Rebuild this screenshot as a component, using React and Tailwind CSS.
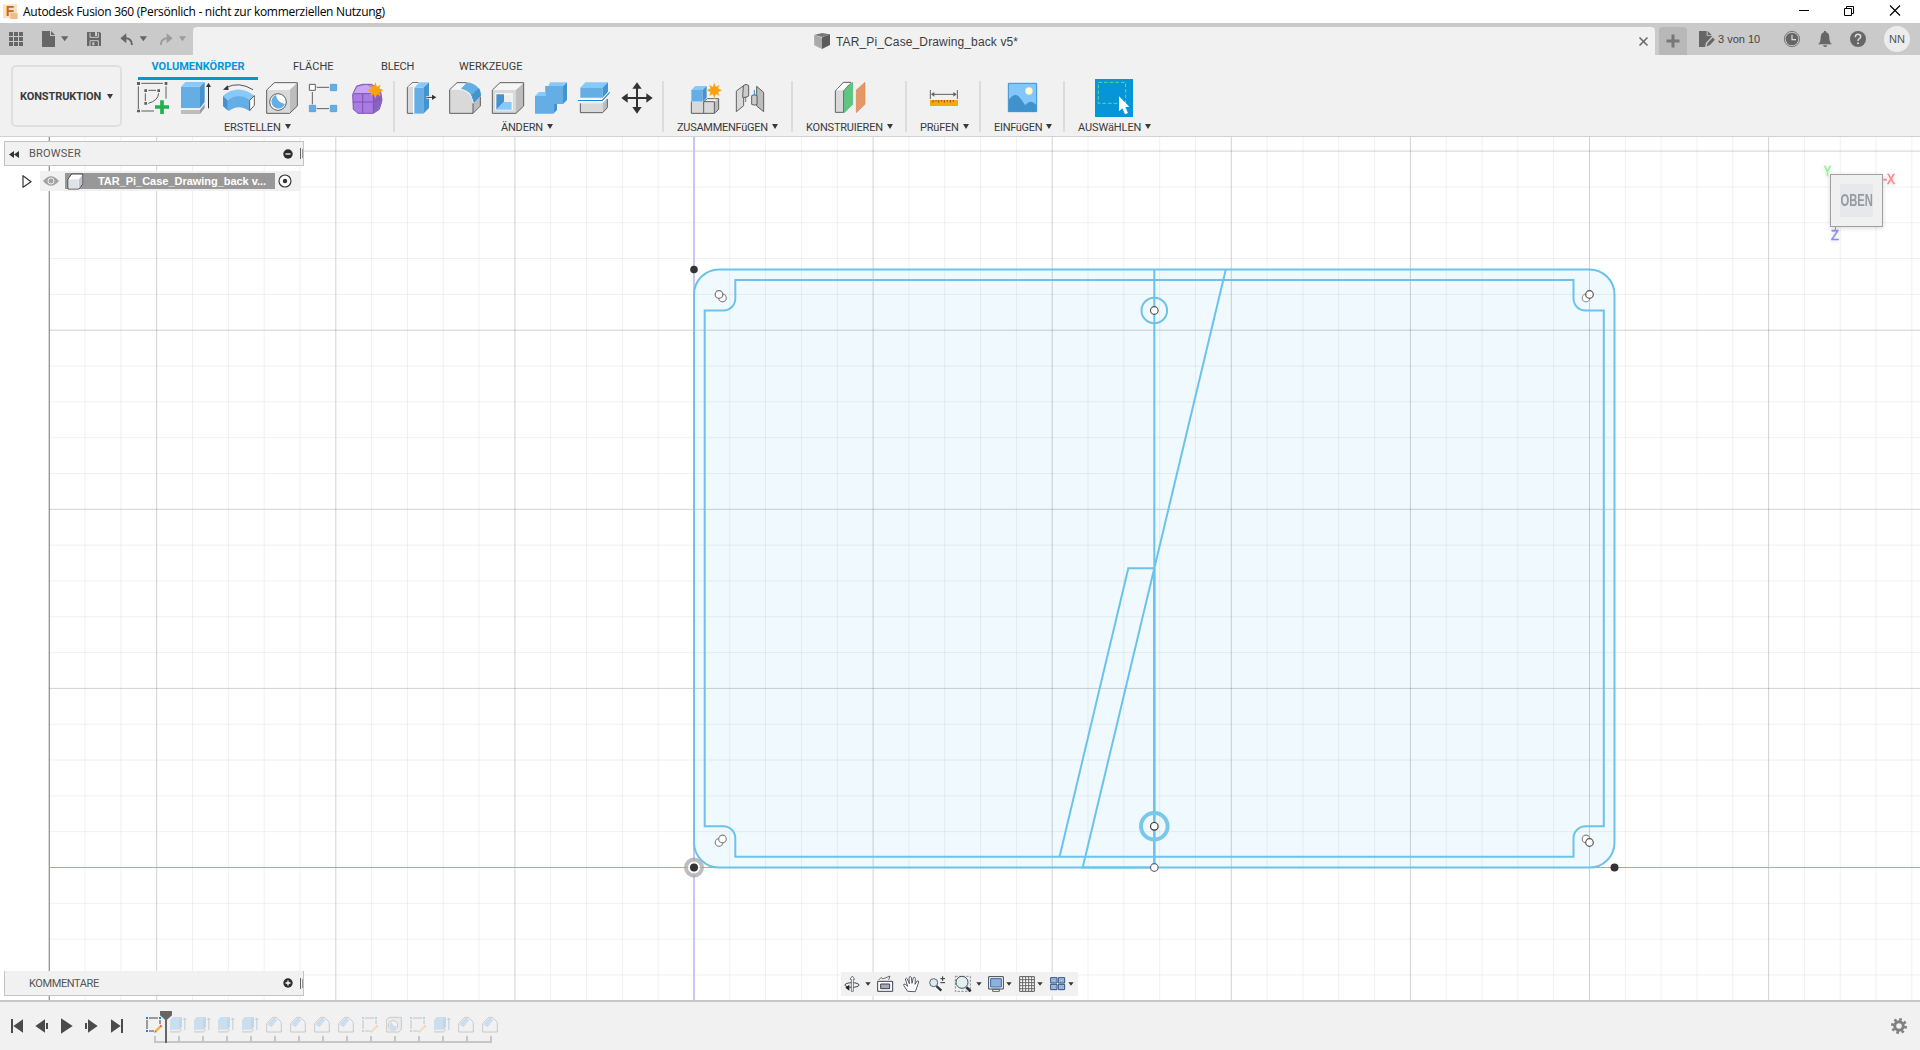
import React from "react";

const BLUE = "#65aee5";
const BLUE_TOP = "#86c9fb";
const BLUE_SIDE = "#4593cc";
const GRAY = "#d9d9d9";
const GRAY_TOP = "#f6f6f6";
const GRAY_SIDE = "#bdbdbd";
const INK = "#5f5f5f";

function Pic({ v, className, children }) {
  return (
    <svg viewBox={v} className={"shrink-0 " + className} fill="none">
      {children}
    </svg>
  );
}

const STAR = "1126,247 1131,260 1142,254 1138,265 1150,271 1138,277 1142,289 1131,283 1126,296 1121,283 1110,289 1114,277 1102,271 1114,265 1110,254 1121,260";

function Tri({ className = "" }) {
  return <span className={"border-x-[3.5px] border-t-[5px] border-x-transparent border-t-[#3a3a3a] " + className} />;
}

function CreateIcons() {
  const c = "h-[35px] w-[43px]";
  return (
    <>
      <Pic v="408 240 129 105" className={c}>
        <path d="M424 250H489M415 259V327M424 333H462M498 259V296" stroke={INK} strokeWidth="3" />
        <path d="M411 246h9v9h-9zM494 246h8v9h-8zM411 329h9v8h-9zM433 268h8v8h-8zM472 268h8v8h-8zM433 306h8v8h-8z" fill={INK} />
        <path d="M445 271H468M436 280V303M445 310Q474 302 476 280" stroke={INK} strokeWidth="3" />
        <path d="M486 301V342M465 321H507" stroke="#22b04d" strokeWidth="11" />
      </Pic>
      <Pic v="537 240 129 105" className={c}>
        <path d="M543 330H600V342H543z" fill="#bdbdbd" />
        <path d="M600 330L614 312V324L600 342z" fill="#9a9a9a" />
        <path d="M543 260H600V324H543z" fill={BLUE} />
        <path d="M543 260L556 246H614L600 260z" fill={BLUE_TOP} />
        <path d="M600 260L614 246V306L600 324z" fill={BLUE_SIDE} />
        <path d="M625.500 258V325" stroke="#333" strokeWidth="3" />
        <path d="M625.500 248L633 261H618z" fill="#333" />
      </Pic>
      <Pic v="666 240 129 105" className={c}>
        <path d="M678 263Q716 243 759 269" stroke="#333" strokeWidth="2.500" />
        <path d="M669 269L683 256L686 270z" fill="#333" />
        <path d="M669 287Q714 250 763 287L749 301Q716 276 682 301z" fill={BLUE_TOP} />
        <path d="M669 288L682 301Q716 276 749 300V333Q716 310 686 333L669 318z" fill={BLUE} />
        <path d="M682 301V331L669 318V288z" fill={BLUE_SIDE} />
        <path d="M749 301L763 287V316L749 332z" fill="#fff" stroke={INK} strokeWidth="3" />
      </Pic>
      <Pic v="795 240 129 105" className={c}>
        <path d="M800 270L823 248H892L869 270z" fill={GRAY_TOP} />
        <path d="M869 270L892 248V318L869 340z" fill={GRAY_SIDE} />
        <path d="M800 270H869V340H800z" fill={GRAY} />
        <path d="M800 270L823 248H892V318L869 340H800z" stroke={INK} strokeWidth="3" />
        <circle cx="834" cy="306" r="25" fill="#fff" stroke={INK} strokeWidth="3" />
        <path d="M828 285Q830 307 855 312A21 21 0 1 1 828 285" fill={BLUE} />
      </Pic>
      <Pic v="924 240 129 105" className={c}>
        <path d="M950 262H987M937 276V313M950 326H987" stroke={INK} strokeWidth="3" />
        <path d="M928 253h18v18h-18z" fill="#fff" stroke={INK} strokeWidth="3" />
        <path d="M991 253h19v19h-19zM928 316h19v19h-19zM991 316h19v19h-19z" fill={BLUE} stroke={BLUE_SIDE} strokeWidth="2" />
      </Pic>
      <Pic v="1053 240 129 105" className={c}>
        <path d="M1058 283L1070 258L1088 253H1115L1142 275L1146 300L1138 328L1120 340H1074L1060 328z" fill="#a97be3" stroke="#7d54b4" strokeWidth="3" strokeLinejoin="round" />
        <path d="M1060 282L1072 260L1100 254L1122 268L1116 280z" fill="#c9a5f5" />
        <path d="M1122 282L1144 285V310L1132 332L1120 336z" fill="#8a60c0" />
        <path d="M1058 306H1120L1145 295M1088 282V340M1061 281H1118L1142 272M1120 282V338" stroke="#7d54b4" strokeWidth="3" />
        <polygon points={STAR} fill="#f9a20c" />
      </Pic>
    </>
  );
}

function ModifyIcons() {
  const c = "h-[35px] w-[43px]";
  return (
    <>
      <Pic v="15 90 129 105" className={c}>
        <path d="M22 112L37 98H58L42 112V190H22z" fill={GRAY} stroke={INK} strokeWidth="3" />
        <path d="M24 111L38 99H56L42 111z" fill={GRAY_TOP} />
        <path d="M39 112V191H70L87 173V96H57L40 112z" fill="#fff" />
        <path d="M43 113H70V191H43z" fill={BLUE} />
        <path d="M43 113L58 97H87L70 113z" fill={BLUE_TOP} />
        <path d="M70 113L87 97V174L70 191z" fill={BLUE_SIDE} />
        <path d="M79 142H98" stroke="#fff" strokeWidth="8" />
        <path d="M79 142H98" stroke="#333" strokeWidth="3" />
        <path d="M96 134L109 142L96 150z" fill="#333" />
      </Pic>
      <Pic v="144 90 129 105" className={c}>
        <path d="M149 119L171 98H198L184 119z" fill={GRAY_TOP} />
        <path d="M149 119H178Q214 124 219 160V190H149z" fill={GRAY} />
        <path d="M219 162L241 140V166L219 190z" fill={GRAY_SIDE} />
        <path d="M200 98H171L149 119V190H219L241 168V140M219 160V190" stroke={INK} strokeWidth="3" />
        <path d="M183 116L201 97Q240 102 243 137L222 158Q217 122 183 116z" fill={BLUE} />
        <path d="M222 158L243 137Q242 122 237 114L214 136z" fill={BLUE_SIDE} />
      </Pic>
      <Pic v="273 90 129 105" className={c}>
        <path d="M277 120L300 98H371L348 120z" fill={GRAY_TOP} />
        <path d="M348 120L371 98V168L348 190z" fill={GRAY_SIDE} />
        <path d="M277 120H348V190H277z" fill={GRAY} />
        <path d="M277 120L300 98H371V168L348 190H277z" stroke={INK} strokeWidth="3" />
        <path d="M286 130H338V181H286z" fill="#fff" />
        <path d="M289 133H312V156L289 179z" fill={BLUE_SIDE} />
        <path d="M312 133H335V156H312z" fill="#eee" />
        <path d="M289 179L312 156H335V179z" fill={BLUE_TOP} />
      </Pic>
      <Pic v="402 90 129 105" className={c}>
        <path d="M405 138L417 126H437L450 97H500L488 108H436V138z" fill={BLUE_TOP} />
        <path d="M405 138H436V108H489V162H460V191H405z" fill={BLUE} />
        <path d="M489 108L501 97V150L489 162zM460 162H471V180L460 191z" fill={BLUE_SIDE} />
      </Pic>
      <Pic v="531 90 129 105" className={c}>
        <path d="M541 113L556 97H624L608 113z" fill={BLUE_TOP} />
        <path d="M541 113H608V143H541z" fill={BLUE} />
        <path d="M608 113L624 97V128L608 143z" fill={BLUE_SIDE} />
        <path d="M541 160H608V188H541z" fill={GRAY} />
        <path d="M608 160L622 145V173L608 188z" fill={GRAY_SIDE} />
        <path d="M541 160V188H608L622 173V147" stroke={INK} strokeWidth="3" />
        <path d="M534 151.500H607L629 127" stroke="#fff" strokeWidth="9" />
        <path d="M534 151.500H607L629 127" stroke="#0f8fe0" strokeWidth="3.500" />
      </Pic>
      <Pic v="660 90 129 105" className={c}>
        <path d="M711 108V180M677 144H745" stroke="#333" strokeWidth="6" />
        <path d="M711 97L725 116H697zM711 191L725 171H697zM664 144L683 130V158zM758 144L739 130V158z" fill="#333" />
      </Pic>
    </>
  );
}

function JointIcons() {
  const c = "h-[35px] w-[43px]";
  return (
    <>
      <Pic v="861 90 129 105" className={c}>
        <path d="M874 120H908V155H874z" fill={BLUE} />
        <path d="M874 120L886 108H920L908 120z" fill={BLUE_TOP} />
        <path d="M908 120L920 108V143L908 155z" fill={BLUE_SIDE} />
        <path d="M874 155H911V190H874z" fill={GRAY} />
        <path d="M911 155H943V190H911z" fill={GRAY} />
        <path d="M911 155L922 146H956L943 155z" fill={GRAY_TOP} />
        <path d="M943 155L956 146V178L943 190z" fill={GRAY_SIDE} />
        <path d="M874 155V190H943L956 178V146H922L911 155V190M911 155H943V190" stroke={INK} strokeWidth="3" />
        <polygon transform="translate(-183 -150)" points={STAR} fill="#f9a20c" stroke="#f2f2f2" strokeWidth="1" />
      </Pic>
      <Pic v="990 90 129 105" className={c}>
        <path d="M1009 123L1031 107V167L1009 185z" fill={GRAY} stroke={INK} strokeWidth="3" />
        <path d="M1030 107Q1038 99 1046 107V138Q1038 145 1028 142z" fill="#ccc" stroke={INK} strokeWidth="3" />
        <path d="M1070 109L1091 127V185L1070 168z" fill={GRAY_SIDE} stroke={INK} strokeWidth="3" />
        <path d="M1055 137Q1063 131 1071 137V163Q1063 168 1055 163z" fill="#ccc" stroke={INK} strokeWidth="3" />
        <path d="M1037 139V156M1063 120V137" stroke="#1d93e4" strokeWidth="3" />
      </Pic>
    </>
  );
}

function RibbonGroup({ w, iconPad, labelPad, label, track = "tracking-[-0.2px]", children }) {
  return (
    <div className={"flex flex-col pt-[3px] " + w}>
      <div className={"flex h-[35px] " + iconPad}>{children}</div>
      <div className={"flex h-6 items-center gap-[4px] pt-[2px] " + labelPad}>
        <span className={"whitespace-nowrap " + track}>{label}</span>
        <Tri className="-mt-[3px]" />
      </div>
    </div>
  );
}

const Sep = () => <div className="mt-1 h-[51px] w-[2px] shrink-0 bg-[#dcdcdc]" />;

function TitleBar() {
  return (
    <div className="flex h-[23px] items-center bg-white">
      <Pic v="0 0 48 54" className="ml-[3px] h-[18px] w-[16px]">
        <rect x="0" y="4" width="42" height="42" fill="#fbe0c8" />
        <rect x="22" y="30" width="22" height="18" fill="#f6b98a" />
        <text x="8" y="40" fontSize="42" fontWeight="bold" fontFamily="Liberation Sans, sans-serif" fill="#c96a17">F</text>
      </Pic>
      <span className="ml-[4px] mt-px whitespace-nowrap font-['Open_Sans',sans-serif] text-[12px] tracking-[-0.28px] text-black">
        Autodesk Fusion 360 (Persönlich - nicht zur kommerziellen Nutzung)
      </span>
      <Pic v="0 0 105 20" className="ml-auto mr-[17px] h-5 w-[105px]">
        <path d="M1 8.500h10" stroke="#000" />
        <path d="M46.500 6.500h7v7h-7zM48.500 6V4.500h7v7H54" stroke="#000" />
        <path d="M92 3.500l10 10M102 3.500l-10 10" stroke="#000" strokeWidth="1.200" />
      </Pic>
    </div>
  );
}

function TabBar() {
  const c = "#666666";
  return (
    <div className="flex h-8 bg-[#cacaca]">
      <div className="flex w-[193px]">
        <Pic v="0 69 102 96" className="h-8 w-[34px]">
          <path d="M27 96h12v12H27zM42 96h12v12H42zM57 96h12v12H57zM27 111h12v12H27zM42 111h12v12H42zM57 111h12v12H57zM27 126h12v12H27zM42 126h12v12H42zM57 126h12v12H57z" fill={c} />
        </Pic>
        <Pic v="102 69 138 96" className="h-8 w-[46px]">
          <path d="M126 93H150V108H165V141H126zM153 93L165 105H153z" fill={c} />
          <path d="M183 109H205L194 124z" fill={c} />
        </Pic>
        <Pic v="240 69 90 96" className="h-8 w-[30px]">
          <path d="M261 96H299L303 100V138H261z" fill={c} />
          <path d="M270 98V112H295V98M270 138V122H295V138" stroke="#cacaca" strokeWidth="3" />
          <path d="M285 96h6v12h-6zM277 127h6v9h-6z" fill="#cacaca" />
        </Pic>
        <Pic v="330 69 129 96" className="h-8 w-[43px]">
          <path d="M361 115L379 100V130z" fill={c} />
          <path d="M374 115Q395 113 396 135" stroke={c} strokeWidth="6" />
          <path d="M419 109H441L430 124z" fill={c} />
        </Pic>
        <Pic v="459 69 120 96" className="h-8 w-[40px]">
          <path d="M518 115L500 100V130z" fill="#9b9b9b" />
          <path d="M505 115Q484 113 482 135" stroke="#9b9b9b" strokeWidth="6" />
          <path d="M537 109H558L547 124z" fill="#9b9b9b" />
        </Pic>
      </div>
      <div className="mt-1 flex h-7 w-[1462px] items-center rounded-t-[4px] bg-[#f1f1f1] text-[#3c3c3c]">
        <Pic v="102 39 48 48" className="ml-[621px] h-4 w-4">
          <path d="M102 45L126 39L150 43L126 51z" fill="#777" />
          <path d="M102 45L126 53V87L103 76z" fill="#a9a9a9" />
          <path d="M126 52L150 43V75L126 87z" fill="#5c5c5c" />
        </Pic>
        <span className="ml-[6px] mt-px whitespace-nowrap font-['Liberation_Sans',sans-serif] text-[12px] tracking-[0.13px]">TAR_Pi_Case_Drawing_back v5*</span>
        <Pic v="0 0 9 9" className="ml-auto mr-[7px] h-[9px] w-[9px]">
          <path d="M.5.5l8 8M8.500.5l-8 8" stroke="#666" strokeWidth="1.500" />
        </Pic>
      </div>
      <div className="ml-1 mt-1 flex h-7 w-7 items-center justify-center rounded-t-[4px] bg-[#b8b8b8]">
        <Pic v="0 0 14 14" className="h-[14px] w-[14px]">
          <path d="M7 .5v13M.5 7h13" stroke="#777" strokeWidth="3" />
        </Pic>
      </div>
      <Pic v="291 69 60 96" className="ml-[10px] h-8 w-[20px]">
        <path d="M297 93H320V107H335V110L318 128L315 141H297zM323 93L335 105H323z" fill={c} />
        <path d="M318 141L322 129L338 112L346 119L330 136z" fill={c} stroke="#cacaca" strokeWidth="2" />
      </Pic>
      <span className="ml-[1px] mt-[1px] w-[66px] whitespace-nowrap font-['Liberation_Sans',sans-serif] text-[11px] leading-[31px] text-[#444]">3 von 10</span>
      <Pic v="552 69 252 96" className="h-8 w-[84px]">
        <circle cx="576" cy="117" r="23" stroke={c} strokeWidth="2.500" />
        <circle cx="576" cy="117" r="19" fill={c} />
        <path d="M576 104V119H588" stroke="#ddd" strokeWidth="3.500" />
        <path d="M654 133Q662 128 662 112Q663 98 672 97V93H678V97Q688 98 688 112Q688 128 696 133zM669 136H682Q681 141 675.500 141Q670 141 669 136z" fill={c} />
        <circle cx="774" cy="117" r="24" fill={c} />
        <path d="M766 112Q766 103 774 103Q782 103 782 110Q782 114 778 116Q774 118 774 123" stroke="#ddd" strokeWidth="4.500" />
        <circle cx="774" cy="130" r="3" fill="#ddd" />
      </Pic>
      <div className="ml-[16px] mt-[3px] flex h-[26px] w-[26px] items-center justify-center rounded-full bg-[#ececec]">
        <span className="font-['Liberation_Sans',sans-serif] text-[11px] text-[#555]">NN</span>
      </div>
    </div>
  );
}

function Ribbon() {
  return (
    <div className="flex h-[82px] border-b border-[#d2d2d2] bg-[#f1f1f1] font-[Roboto,sans-serif] text-[11px] text-[#3a3a3a]">
      <div className="ml-[11px] mr-[14px] mt-[10px] flex h-[62px] w-[111px] shrink-0 items-center gap-[6px] rounded-[5px] border-2 border-[#dfdfdf] pl-[7px] pt-[2px]">
        <span className="font-bold tracking-[-0.1px]">KONSTRUKTION</span>
        <Tri className="-mt-px" />
      </div>
      <div className="flex flex-col">
        <div className="flex h-[22px] leading-[24px]">
          <div className="ml-[2px] flex w-[120px] shrink-0 flex-col items-center">
            <span className="h-[22px] font-bold text-[#0696d7]">VOLUMENKÖRPER</span>
            <div className="h-[3px] w-full shrink-0 bg-[#0696d7]" />
          </div>
          <span className="ml-[35px] w-[88px]">FLÄCHE</span>
          <span className="w-[78px] tracking-[-0.2px]">BLECH</span>
          <span>WERKZEUGE</span>
        </div>
        <div className="flex">
          <RibbonGroup w="w-[257px]" iconPad="" labelPad="pl-[88px]" label="ERSTELLEN"><CreateIcons /></RibbonGroup>
          <Sep />
          <RibbonGroup w="w-[267px]" iconPad="pl-[10px]" labelPad="pl-[106px]" label="ÄNDERN"><ModifyIcons /></RibbonGroup>
          <Sep />
          <RibbonGroup w="w-[127px]" iconPad="pl-[23px]" labelPad="pl-[13px]" label="ZUSAMMENFüGEN" track="tracking-[-0.28px]"><JointIcons /></RibbonGroup>
          <Sep />
          <RibbonGroup w="w-[112px]" iconPad="pl-[37px]" labelPad="pl-[13px]" label="KONSTRUIEREN">
            <Pic v="150 180 129 105" className="h-[35px] w-[43px]">
              <path d="M166 213L190 187H213L191 213V277H166z" fill={GRAY} stroke={INK} strokeWidth="3" />
              <path d="M169 211L191 189H211L190 211z" fill="#fff" />
              <path d="M193 210L218 187V253L193 278z" fill="#5bc77f" stroke="#3ea862" strokeWidth="1.500" />
              <path d="M229 210L255 187V253L229 278z" fill="#e59865" stroke="#c97a45" strokeWidth="1.500" />
            </Pic>
          </RibbonGroup>
          <Sep />
          <RibbonGroup w="w-[72px]" iconPad="pl-[20px]" labelPad="pl-[13px]" label="PRüFEN">
            <Pic v="441 180 105 105" className="h-[35px] w-[35px]">
              <path d="M451 210V237M532 210V237M456 223H528" stroke={INK} strokeWidth="3" />
              <path d="M453 223L463 216V230zM530 223L520 216V230z" fill={INK} />
              <path d="M450 240H534V258H450z" fill="#f9a70f" />
              <path d="M459 240V248M468 240V245M476 240V248M485 240V245M493 240V248M502 240V245M511 240V248M520 240V245" stroke="#7c5a1a" strokeWidth="3" />
            </Pic>
          </RibbonGroup>
          <Sep />
          <RibbonGroup w="w-[82px]" iconPad="pl-[24px]" labelPad="pl-[13px]" label="EINFüGEN" track="tracking-[-0.3px]">
            <Pic v="675 180 105 105" className="h-[35px] w-[35px]">
              <path d="M685 190H770V275H685z" fill="#82c7fb" stroke="#3f92cb" strokeWidth="3" />
              <circle cx="747" cy="213" r="11" fill="#ffffd8" stroke="#e0d890" />
              <path d="M686 240Q706 212 722 236L736 256Q750 236 769 254V275H686z" fill="#3f92cb" />
            </Pic>
          </RibbonGroup>
          <Sep />
          <RibbonGroup w="w-[110px]" iconPad="pl-[30px]" labelPad="pl-[13px]" label="AUSWäHLEN" track="tracking-[-0.1px]">
            <Pic v="945 177 114 114" className="-mt-px h-[38px] w-[38px]">
              <path d="M945 177H1059V291H945z" fill="#0696d7" />
              <path d="M955 187H1037V250H955z" stroke="#5fd98a" strokeWidth="3" strokeDasharray="11 6" />
              <path d="M1017 229V274L1027 265L1035 283L1044 279L1036 262L1048 260z" fill="#fff" />
            </Pic>
          </RibbonGroup>
        </div>
      </div>
    </div>
  );
}

const X0 = 694;
const Y0 = 867.5;
const STEP = 35.82;

function Point({ x, y, r = 3.8, c = "#555", fill = "#fff" }) {
  return <circle cx={x} cy={y} r={r} fill={fill} stroke={c} strokeWidth="1.200" />;
}

function Sketch() {
  const xs = [];
  for (let i = -18; i <= 34; i++) xs.push(i);
  const ys = [];
  for (let j = -3; j <= 20; j++) ys.push(j);
  const line = "#6cc3ea";
  return (
    <svg viewBox="0 137 1920 863" className="absolute inset-0 h-[863px] w-[1920px]" fill="none">
      <path
        d="M694 294.500A25 25 0 0 1 719 269.500H1589.500A25 25 0 0 1 1614.500 294.500V842.500A25 25 0 0 1 1589.500 867.500H719A25 25 0 0 1 694 842.500z"
        fill="#f0f9fe"
      />
      {xs.map((i) => (
        <path key={i} d={`M${X0 + i * STEP} 137V1000`} stroke="#000" strokeOpacity={i === -18 ? 0.55 : i % 5 === 0 ? 0.18 : 0.06} />
      ))}
      {ys.map((j) => (
        <path key={j} d={`M49 ${Y0 - j * STEP}H1920`} stroke="#000" strokeOpacity={j % 5 === 0 ? 0.18 : 0.06} />
      ))}
      <path d="M49 867.500H1920" stroke="#fff" />
      <path d="M49 867.500H1920" stroke="#f58a8a" />
      <path d="M694 137V1000" stroke="#c6c6fa" strokeWidth="2" />
      <circle cx="694" cy="867.500" r="8" stroke="#999" strokeOpacity=".65" strokeWidth="4" fill="#fff" fillOpacity=".7" />
      <g stroke={line} strokeWidth="2">
        <path d="M694 294.500A25 25 0 0 1 719 269.500H1589.500A25 25 0 0 1 1614.500 294.500V842.500A25 25 0 0 1 1589.500 867.500H719A25 25 0 0 1 694 842.500z" />
        <path d="M735.300 280H1573.500V298.500A12 12 0 0 0 1585.500 310.500H1603.800V826.300H1585.500A12 12 0 0 0 1573.500 838.300V856.800H735.300V838.300A12 12 0 0 0 723.300 826.300H704.700V310.500H723.300A12 12 0 0 0 735.300 298.500z" />
        <path d="M1154.300 269.500V867.500M1225.800 269.500L1154.300 568.300L1082.700 867.500H1154.300M1154.300 568.300H1128.300L1059.500 857" />
        <circle cx="1154.300" cy="310.500" r="12.800" />
        <path d="M1154.300 568V867.500" strokeWidth="2.300" />
        <circle cx="1154.300" cy="826.300" r="13.300" strokeWidth="4" stroke="#79c8ec" />
      </g>
      <Point x={1154.300} y={310.500} />
      <Point x={1154.300} y={826.300} c="#333" />
      <Point x={1154.300} y={867.500} c="#666" />
      <Point x={722.500} y={298} c="#888" />
      <Point x={719} y={294.500} c="#777" />
      <Point x={1586} y={298} c="#999" />
      <Point x={1589.500} y={294.500} />
      <Point x={719} y={842.500} c="#888" />
      <Point x={722.500} y={839} c="#888" />
      <Point x={1586} y={839} c="#888" />
      <Point x={1589.500} y={842.500} />
      <circle cx="694" cy="269.500" r="3.800" fill="#333" />
      <circle cx="694" cy="867.500" r="4" fill="#333" />
      <circle cx="1614.500" cy="867.500" r="4" fill="#333" />
    </svg>
  );
}

function ViewCube() {
  return (
    <svg viewBox="1815 155 90 95" className="absolute left-[1815px] top-[18px] h-[95px] w-[90px] drop-shadow-sm" fill="none" fontFamily="Liberation Sans, sans-serif">
      <text x="1824" y="176" fontSize="14" textLength="7" lengthAdjust="spacingAndGlyphs" fill="#90f590" stroke="#90f590" strokeWidth=".7">Y</text>
      <text x="1883" y="184" fontSize="14" textLength="12" lengthAdjust="spacingAndGlyphs" fill="#fb8484" stroke="#fb8484" strokeWidth=".5">-X</text>
      <text x="1831" y="240" fontSize="14" textLength="8" lengthAdjust="spacingAndGlyphs" fill="#8a8afa" stroke="#8a8afa" strokeWidth=".5">Z</text>
      <path d="M1835.500 226V231" stroke="#8a8afa" />
      <rect x="1830.500" y="174.500" width="52" height="52" fill="#f0f0f0" stroke="#a0a0a0" />
      <rect x="1840" y="184" width="33" height="33" fill="#e6e8eb" />
      <text x="1840.500" y="206" fontSize="16" fontWeight="bold" textLength="32.500" lengthAdjust="spacingAndGlyphs" fill="#979ba1">OBEN</text>
    </svg>
  );
}

function Handle() {
  return (
    <div className="ml-[7px] flex gap-px">
      <span className="h-[11px] w-px bg-[#666]" />
      <span className="h-[9px] w-px self-center bg-[#999]" />
    </div>
  );
}

function Panel({ title, plus }) {
  return (
    <div className={"flex h-[25px] w-[300px] items-center border border-[#c4c4c4] bg-[#f1f1f1] font-[Roboto,sans-serif] text-[11px] text-[#555] " + (plus ? "border-t-0" : "")}>
      <div className="w-[24px] pl-[4px]">
        {!plus && (
          <Pic v="0 0 10 7" className="mt-px h-[7px] w-[10px]">
            <path d="M5 0v7L0 3.500zM10 0v7L5 3.500z" fill="#333" />
          </Pic>
        )}
      </div>
      <span className={plus ? "mt-[2px] tracking-[-0.4px]" : "mt-px tracking-[0.2px]"}>{title}</span>
      <Pic v="0 0 10 10" className="ml-auto h-[10px] w-[10px]">
        <circle cx="5" cy="5" r="4.700" fill="#2d2d2d" />
        <path d={plus ? "M2.500 5h5M5 2.500v5" : "M2.500 5h5"} stroke="#fff" strokeWidth="1.300" />
      </Pic>
      <Handle />
    </div>
  );
}

function BrowserRow() {
  return (
    <div className="flex h-5 w-[279px] items-center">
      <Pic v="0 0 30 39" className="mr-[8px] h-[13px] w-[10px]">
        <path d="M3 2V37L27 20z" fill="#fff" stroke="#333" strokeWidth="3.500" strokeLinejoin="round" />
      </Pic>
      <div className="flex h-5 flex-1 items-center bg-[#f1f1f1]">
        <Pic v="0 0 48 30" className="ml-[3px] h-[10px] w-[16px]">
          <path d="M0 15Q24 -14 48 15Q24 44 0 15z" fill="#a2a2a2" />
          <circle cx="24" cy="15" r="9" stroke="#f1f1f1" strokeWidth="3" />
        </Pic>
        <div className="ml-[6px] flex h-4 w-[210px] items-center bg-[#989898]">
          <Pic v="202 518 51 51" className="ml-[2px] h-[17px] w-[17px]">
            <path d="M205 536L216 521H249V551L238 566H205z" fill="#fff" stroke="#444" strokeWidth="3" strokeLinejoin="round" />
            <path d="M207 537H237V564H207z" fill="#dfe2e8" />
            <path d="M238 537L248 523V550L238 564z" fill="#bfc3ca" />
          </Pic>
          <span className="ml-[14px] whitespace-nowrap font-['Liberation_Sans',sans-serif] text-[11px] font-bold tracking-[-0.03px] text-white">TAR_Pi_Case_Drawing_back v...</span>
        </div>
        <Pic v="0 0 14 14" className="ml-[3px] h-[14px] w-[14px]">
          <circle cx="7" cy="7" r="6" fill="#fff" stroke="#333" strokeWidth="1.100" />
          <circle cx="7" cy="7" r="2.200" fill="#333" />
        </Pic>
      </div>
    </div>
  );
}

const NAV_TRI = "#333";

function NavBar() {
  return (
    <div className="absolute left-[841px] top-[835px] flex h-6 w-[237px] bg-[#f1f1f1]">
      <Pic v="33 36 99 72" className="h-6 w-[33px]">
        <ellipse cx="66" cy="75" rx="21" ry="7" stroke="#3b4150" strokeWidth="3" />
        <path d="M64 94V58H60L67 48L74 58H70V94z" fill="#fff" stroke="#3b4150" strokeWidth="2" />
        <path d="M46 83L58 74V92z" fill="#222" />
        <path d="M106 67H122L114 77z" fill={NAV_TRI} />
      </Pic>
      <Pic v="132 36 72 72" className="h-6 w-6">
        <path d="M143 64H188V94H143z" fill="#fff" stroke="#3b4150" strokeWidth="3" />
        <path d="M152 72H179V86H152z" fill="#aab" stroke="#3b4150" strokeWidth="3" />
        <path d="M146 60L154 52L158 57L180 48L176 60" stroke="#555" strokeWidth="2.500" />
      </Pic>
      <Pic v="204 36 81 72" className="h-6 w-[27px]">
        <path d="M233 94L221 76Q220 70 226 73L233 79L226 57Q229 52 232 57L238 71L237 52Q241 47 244 52L246 70L250 53Q254 49 256 55L255 73L261 63Q266 61 266 66L259 87L256 95z" fill="#fff" stroke="#3b4150" strokeWidth="2.500" strokeLinejoin="round" />
      </Pic>
      <Pic v="285 36 75 72" className="h-6 w-[25px]">
        <path d="M319 78L334 92" stroke="#2f3440" strokeWidth="7" />
        <circle cx="311" cy="68" r="12" fill="#d8ecee" stroke="#5b6270" strokeWidth="3" />
        <path d="M338 49V63M331 56H345M331 68H345" stroke="#333" strokeWidth="3" />
      </Pic>
      <Pic v="360 36 102 72" className="h-6 w-[34px]">
        <path d="M376 49H421V94H376z" stroke="#777" strokeWidth="2.500" strokeDasharray="7 4" />
        <path d="M409 82L422 94" stroke="#2f3440" strokeWidth="8" />
        <circle cx="396" cy="67" r="18" fill="#dff0ee" stroke="#4b5260" strokeWidth="3" />
        <path d="M439 67H455L447 77z" fill={NAV_TRI} />
      </Pic>
      <Pic v="462 36 93 72" className="h-6 w-[31px]">
        <path d="M476 50H520V87H476z" fill="#fff" stroke="#3b4150" strokeWidth="3" />
        <path d="M482 56H514V81H482z" fill="#8fb2dd" stroke="#3c6aa8" strokeWidth="3" />
        <path d="M488 88H508V94H488z" fill="#fff" stroke="#3b4150" strokeWidth="2.500" />
        <path d="M529 67H545L537 77z" fill={NAV_TRI} />
      </Pic>
      <Pic v="555 36 93 72" className="h-6 w-[31px]">
        <path d="M569 50H613V94H569z" fill="#fff" stroke="#555" strokeWidth="3" />
        <path d="M578 50V94M587 50V94M596 50V94M605 50V94M569 59H613M569 68H613M569 77H613M569 86H613" stroke="#666" strokeWidth="3" />
        <path d="M622 67H638L630 77z" fill={NAV_TRI} />
      </Pic>
      <Pic v="648 36 96 72" className="h-6 w-[32px]">
        <path d="M662 53H681V69H662zM685 53H704V69H685zM662 73H681V89H662zM685 73H704V89H685z" fill="#a9c0e2" stroke="#34507e" strokeWidth="3" />
        <path d="M668 59H676V64H668zM691 59H699V64H691zM668 79H676V84H668zM691 79H699V84H691z" fill="#dce7f6" stroke="#6c8fc4" strokeWidth="2" />
        <path d="M715 67H731L723 77z" fill={NAV_TRI} />
      </Pic>
    </div>
  );
}

function FeatureIcon({ kind }) {
  if (kind === "sketch")
    return (
      <>
        <path d="M9 6H36M3 12V39M9 45H24M42 12V24" stroke="#444" strokeWidth="3" />
        <path d="M0 3h6v6H0zM39 3h6v6h-6zM0 42h6v6H0z" fill="#1287de" />
        <path d="M27 43L41 29L46 34L32 48z" fill="#f8b133" />
        <path d="M41 29L44 26L49 31L46 34z" fill="#f0413c" />
        <path d="M27 43L32 48L25 50z" fill="#777" />
      </>
    );
  if (kind === "extrude")
    return (
      <>
        <path d="M0 45H27L36 36V41L29 50H0z" fill="#999" />
        <path d="M0 12L9 3H36V32L27 41H0z" fill={BLUE} />
        <path d="M27 12L36 3V32L27 41z" fill={BLUE_SIDE} />
        <path d="M44.500 9V42M40 12L44.500 6L49 12" stroke="#444" strokeWidth="2.500" />
      </>
    );
  if (kind === "hole")
    return (
      <>
        <path d="M1 11L9 4H46V41L38 48H1z" fill="#ddd" stroke={INK} strokeWidth="3" />
        <circle cx="21" cy="28" r="14" fill="#fff" stroke={INK} strokeWidth="3" />
        <path d="M18 18Q19 29 32 31A11 11 0 1 1 18 18" fill={BLUE} />
      </>
    );
  return (
    <>
      <path d="M2 23L20 4H32L46 19V48H2z" fill="#f3f3f3" stroke={INK} strokeWidth="3" strokeLinejoin="round" />
      <path d="M4 25L24 3L34 12L16 34z" fill={BLUE} />
    </>
  );
}

const FEATURES = [
  "sketch", "extrude", "extrude", "extrude", "extrude", "chamfer", "chamfer", "chamfer",
  "chamfer", "sketch", "hole", "sketch", "extrude", "chamfer", "chamfer",
];

function Timeline() {
  return (
    <div className="flex h-[50px] border-t-2 border-[#c8c8c8] bg-[#f1f1f1]">
      <Pic v="30 126 345 144" className="ml-[10px] h-12 w-[115px]">
        <path d="M33 177h6v42h-6zM69 178V218L40 198zM135 178V218L106 198zM138 189h6v18h-6zM183 175V221L218 198zM255 189h6v18h-6zM264 178V218L293 198zM333 178V218L362 198zM363 177h6v42h-6z" fill="#4a4a4a" />
      </Pic>
      <div className="relative ml-[21px] flex h-[41px] w-[360px] pt-[14px]">
        {FEATURES.map((kind, i) => (
          <div key={i} className="flex h-[27px] w-6 flex-col">
            <Pic v="0 0 51 54" className={"h-[18px] w-[17px] " + (i ? "opacity-[.27]" : "")}>
              <FeatureIcon kind={kind} />
            </Pic>
            <div
              className={
                "ml-[8px] mt-auto h-[7px] border-b-2 border-l-2 border-[#c6c6c6] " +
                (i === FEATURES.length - 1 ? "w-[2px]" : "w-6")
              }
            />
          </div>
        ))}
        <svg viewBox="480 153 36 96" className="absolute left-[14px] top-[9px] h-8 w-3">
          <path d="M480 153H516V166L501 179V249H495V179L480 166z" fill="#666" />
        </svg>
      </div>
      <Pic v="0 0 16 16" className="ml-auto mr-[13px] mt-[16px] h-4 w-4">
        <circle cx="8" cy="8" r="4.300" stroke="#808080" strokeWidth="3" />
        <circle cx="8" cy="8" r="6.600" stroke="#808080" strokeWidth="2.800" strokeDasharray="2.592 2.592" />
      </Pic>
    </div>
  );
}

export default function App() {
  return (
    <div className="flex h-[1050px] w-[1920px] flex-col overflow-hidden bg-white">
      <TitleBar />
      <TabBar />
      <Ribbon />
      <div className="relative h-[863px] overflow-hidden bg-white">
        <Sketch />
        <ViewCube />
        <div className="relative flex h-full flex-col pb-[4px] pl-1 pt-1">
          <Panel title="BROWSER" />
          <div className="ml-[18px] mt-[5px]">
            <BrowserRow />
          </div>
          <div className="mt-auto">
            <Panel title="KOMMENTARE" plus />
          </div>
        </div>
        <NavBar />
      </div>
      <Timeline />
    </div>
  );
}
